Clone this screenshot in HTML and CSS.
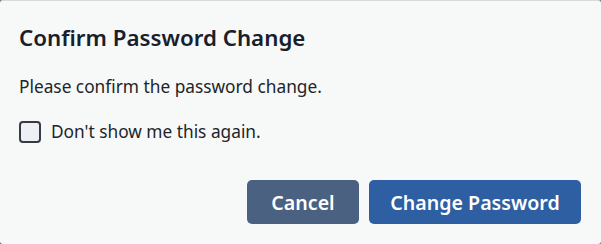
FILE: index.html
```html
<!DOCTYPE html>
<html lang="en">
<head>
<meta charset="utf-8">
<title>Confirm Password Change</title>
<link rel="stylesheet" href="styles.css">
</head>
<body>
<div class="dialog">
  <h2 class="dialog-title">Confirm Password Change</h2>
  <p class="dialog-text">Please confirm the password change.</p>
  <label class="check-row">
    <input type="checkbox" class="check">
    <span>Don't show me this again.</span>
  </label>
  <div class="actions">
    <button class="btn btn-secondary">Cancel</button>
    <button class="btn btn-primary">Change Password</button>
  </div>
</div>
</body>
</html>
```

FILE: styles.css
```css
html, body {
  margin: 0;
  padding: 0;
  height: 100%;
  background: #6b6f73;
}
.dialog {
  box-sizing: border-box;
  height: 244px;
  background: #f7f8f8;
  border-top: 1px solid #d8dbde;
  border-radius: 3px;
  padding: 23px 20px 20px 19px;
  font-family: "Noto Sans", "Open Sans", sans-serif;
  color: #212529;
  display: flex;
  flex-direction: column;
}
.dialog-title {
  margin: 0;
  font-size: 22.3px;
  font-weight: 600;
  line-height: 28px;
  color: #17202b;
}
.dialog-text {
  margin: 23px 0 0;
  font-size: 17.3px;
  line-height: 24px;
}
.check-row {
  margin-top: 21px;
  display: flex;
  align-items: center;
  gap: 10px;
  font-size: 17.3px;
  line-height: 24px;
}
.check {
  appearance: none;
  -webkit-appearance: none;
  margin: 0;
  width: 22px;
  height: 22px;
  box-sizing: border-box;
  border: 2px solid #363c44;
  border-radius: 4px;
  background: #eef0f3;
}
.actions {
  margin-top: auto;
  display: flex;
  justify-content: flex-end;
  gap: 10px;
}
.btn {
  height: 44px;
  border: none;
  border-radius: 5px;
  color: #ffffff;
  font-family: "Noto Sans", "Open Sans", sans-serif;
  font-size: 19.6px;
  font-weight: 600;
  padding: 0;
}
.btn-secondary {
  width: 112px;
  background: #4a6182;
}
.btn-primary {
  width: 212px;
  background: #2e5fa2;
}
```
